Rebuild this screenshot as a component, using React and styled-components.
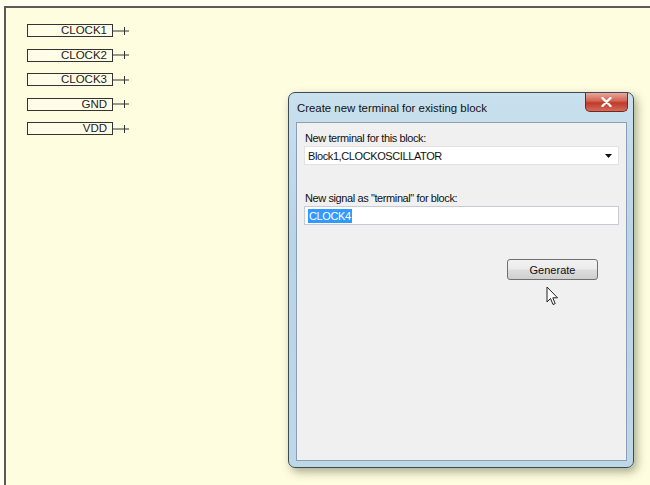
import React from 'react'
import styled, { createGlobalStyle } from 'styled-components'

const Global = createGlobalStyle`
  html, body {
    margin: 0;
    padding: 0;
    width: 650px;
    height: 485px;
    overflow: hidden;
    background: #fffff0;
    font-family: "Liberation Sans", Arial, sans-serif;
  }
`

const Page = styled.div`
  position: relative;
  width: 650px;
  height: 485px;
  padding: 6px 0 0 4px;
  box-sizing: border-box;
`

const Canvas = styled.div`
  height: 100%;
  background: #fffde0;
  border-top: 2px solid #5a5a5a;
  border-left: 2px solid #5a5a5a;
  padding: 16px 0 0 21px;
  box-sizing: border-box;
  display: flex;
  flex-direction: column;
  gap: 11.5px;
`

const Terminal = styled.div`
  display: flex;
  align-items: center;
  height: 13px;
`

const TermBox = styled.div`
  width: 86px;
  height: 13px;
  box-sizing: border-box;
  border: 1px solid #333;
  background: #fffde8;
  color: #222;
  font-size: 11.5px;
  line-height: 11px;
  text-align: right;
  padding-right: 5px;
`

const Pin = styled.svg`
  display: block;
`

const Dialog = styled.div`
  position: absolute;
  left: 288px;
  top: 92px;
  width: 346px;
  height: 376px;
  box-sizing: border-box;
  border: 1px solid #3b4a55;
  border-radius: 7px;
  background: linear-gradient(180deg, #c9e0ee 0%, #b9d4e6 40%, #bfd8e8 100%);
  box-shadow: 3px 4px 10px rgba(60, 70, 40, 0.45);
  padding: 0 6px 6px 7px;
  display: flex;
  flex-direction: column;
`

const TitleBar = styled.div`
  height: 29px;
  display: flex;
  align-items: center;
  justify-content: space-between;
  font-size: 11.4px;
  color: #111;
  padding-left: 1px;
`

const CloseButton = styled.div`
  align-self: flex-start;
  width: 43px;
  height: 19px;
  margin-right: -1px;
  border: 1px solid #6b2a22;
  border-top: none;
  border-radius: 0 0 5px 5px;
  background: linear-gradient(180deg, #e8a89c 0%, #d2614f 45%, #c0392a 55%, #d66a58 100%);
  display: flex;
  align-items: center;
  justify-content: center;
  box-sizing: border-box;
`

const Client = styled.div`
  flex: 1;
  background: #f0f0f0;
  border: 1px solid #8aa0b2;
  padding: 7px 7px 0 7px;
  display: flex;
  flex-direction: column;
  font-size: 11px;
  letter-spacing: -0.4px;
  color: #111;
`

const Label = styled.div`
  height: 16px;
  line-height: 16px;
  padding-left: 1px;
`

const Field = styled.div`
  height: 19px;
  box-sizing: border-box;
  background: #fff;
  border: 1px solid ${p => (p.$combo ? '#e2e2e2' : '#c8ccd2')};
  display: flex;
  align-items: center;
  justify-content: space-between;
  padding: 0 6px 0 3px;
  margin-bottom: ${p => p.$gap || 0}px;
`

const Selected = styled.span`
  background: #3399ff;
  color: #fff;
  padding: 1px 1px;
`

const ButtonRow = styled.div`
  display: flex;
  justify-content: flex-end;
  padding-right: 21px;
  margin-top: 34px;
  position: relative;
`

const Button = styled.div`
  width: 91px;
  height: 21px;
  box-sizing: border-box;
  border: 1px solid #707070;
  border-radius: 3px;
  background: linear-gradient(180deg, #f2f2f2 0%, #ebebeb 48%, #dddddd 52%, #cfcfcf 100%);
  display: flex;
  align-items: center;
  justify-content: center;
  font-size: 11px;
  letter-spacing: 0;
`

const Cursor = styled.svg`
  position: absolute;
  left: 242px;
  top: 27px;
`

function TerminalPin () {
  return (
    <Pin width="17" height="12" viewBox="0 0 17 12">
      <line x1="0" y1="6" x2="16" y2="6" stroke="#333" strokeWidth="1" />
      <line x1="11.5" y1="2" x2="11.5" y2="10" stroke="#333" strokeWidth="1" />
    </Pin>
  )
}

const terminals = ['CLOCK1', 'CLOCK2', 'CLOCK3', 'GND', 'VDD']

export default function App () {
  return (
    <Page>
      <Global />
      <Canvas>
        {terminals.map(t => (
          <Terminal key={t}>
            <TermBox>{t}</TermBox>
            <TerminalPin />
          </Terminal>
        ))}
      </Canvas>
      <Dialog>
        <TitleBar>
          <span>Create new terminal for existing block</span>
          <CloseButton>
            <svg width="11" height="10" viewBox="0 0 11 10">
              <path d="M1.5 1 L9.5 9 M9.5 1 L1.5 9" stroke="#fff" strokeWidth="2.4" strokeLinecap="round" />
            </svg>
          </CloseButton>
        </TitleBar>
        <Client>
          <Label>New terminal for this block:</Label>
          <Field $combo $gap={25}>
            <span>Block1,CLOCKOSCILLATOR</span>
            <svg width="7" height="4" viewBox="0 0 7 4">
              <path d="M0 0 L7 0 L3.5 4 Z" fill="#111" />
            </svg>
          </Field>
          <Label>New signal as "terminal" for block:</Label>
          <Field>
            <Selected>CLOCK4</Selected>
          </Field>
          <ButtonRow>
            <Button>Generate</Button>
            <Cursor width="13" height="20" viewBox="0 0 13 20">
              <path d="M1 1 L1 16 L4.5 12.5 L7 18.5 L9.2 17.6 L6.8 11.8 L11.5 11.8 Z" fill="#fff" stroke="#222" strokeWidth="1" strokeLinejoin="round" />
            </Cursor>
          </ButtonRow>
        </Client>
      </Dialog>
    </Page>
  )
}
